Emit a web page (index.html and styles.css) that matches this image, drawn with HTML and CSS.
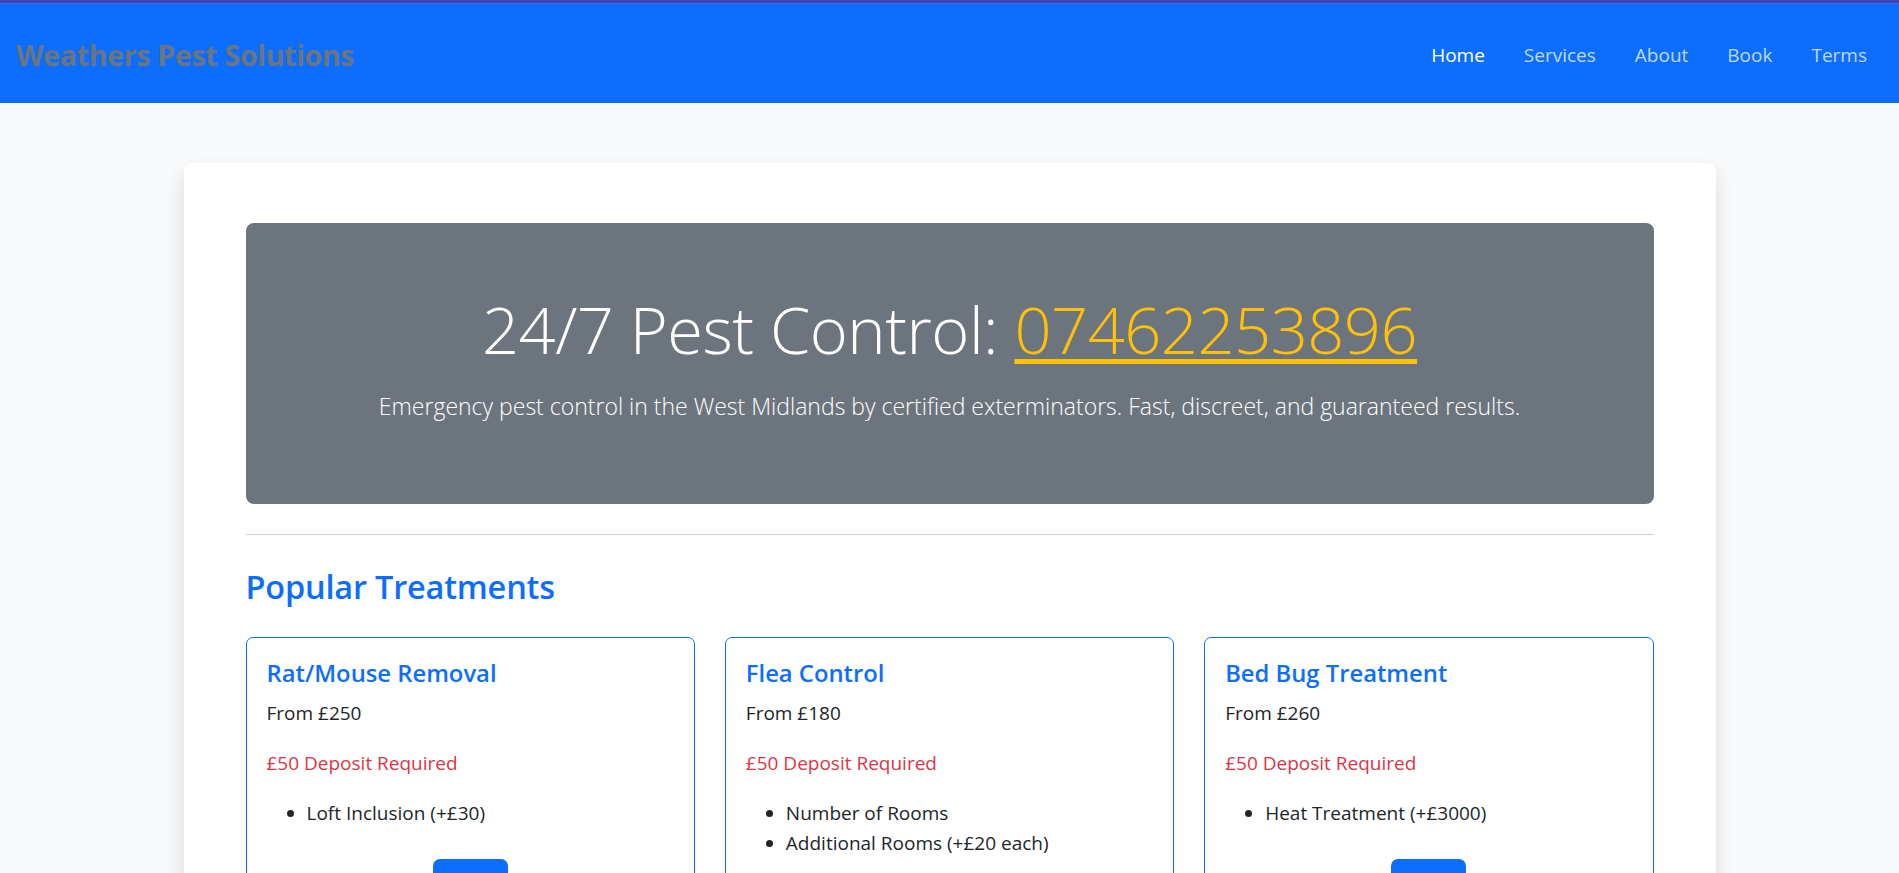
FILE: index.html
```html
<!DOCTYPE html>
<html lang="en">
<head>
<meta charset="utf-8">
<title>Weathers Pest Solutions</title>
<link rel="stylesheet" href="styles.css">
</head>
<body>
<div class="topbar"></div>
<nav class="navbar">
  <a class="brand" href="#">Weathers Pest Solutions</a>
  <ul class="nav">
    <li><a class="nav-link active" href="#">Home</a></li>
    <li><a class="nav-link" href="#">Services</a></li>
    <li><a class="nav-link" href="#">About</a></li>
    <li><a class="nav-link" href="#">Book</a></li>
    <li><a class="nav-link" href="#">Terms</a></li>
  </ul>
</nav>
<main class="page">
  <section class="panel">
    <div class="hero">
      <h1 class="hero-title">24/7 Pest Control: <a class="phone" href="#">07462253896</a></h1>
      <p class="lead">Emergency pest control in the West Midlands by certified exterminators. Fast, discreet, and guaranteed results.</p>
    </div>
    <hr class="divider">
    <h2 class="section-title">Popular Treatments</h2>
    <div class="cards">
      <div class="card">
        <h5 class="card-title">Rat/Mouse Removal</h5>
        <p class="price">From £250</p>
        <p class="deposit">£50 Deposit Required</p>
        <ul class="extras">
          <li>Loft Inclusion (+£30)</li>
        </ul>
        <div class="actions"><a class="btn" href="#">Book</a></div>
      </div>
      <div class="card">
        <h5 class="card-title">Flea Control</h5>
        <p class="price">From £180</p>
        <p class="deposit">£50 Deposit Required</p>
        <ul class="extras">
          <li>Number of Rooms</li>
          <li>Additional Rooms (+£20 each)</li>
        </ul>
        <div class="actions"><a class="btn" href="#">Book</a></div>
      </div>
      <div class="card">
        <h5 class="card-title">Bed Bug Treatment</h5>
        <p class="price">From £260</p>
        <p class="deposit">£50 Deposit Required</p>
        <ul class="extras">
          <li>Heat Treatment (+£3000)</li>
        </ul>
        <div class="actions"><a class="btn" href="#">Book</a></div>
      </div>
    </div>
  </section>
</main>
</body>
</html>
```
FILE: styles.css
```css
html, body {
  margin: 0;
  padding: 0;
}
html {
  overflow: hidden;
}
body {
  font-family: "Open Sans", "Noto Sans", sans-serif;
  color: #212529;
  background: #f8f9fa;
  font-size: 19px;
}
.topbar {
  height: 3px;
  background: #3c45b9;
  border-bottom: 1px solid #3a6ee4;
}
.navbar {
  height: 99px;
  background: #0d6efd;
  display: flex;
  align-items: center;
  justify-content: space-between;
  padding: 0 13px 0 16px;
}
.brand {
  color: #6c757d;
  font-weight: 700;
  font-size: 28.5px;
  text-decoration: none;
  letter-spacing: -0.3px;
  line-height: 36px;
  padding-top: 2px;
}
.nav {
  list-style: none;
  display: flex;
  margin: 0;
  padding: 0;
}
.nav-link {
  display: block;
  padding: 2px 19px 0 20px;
  font-size: 19px;
  color: rgba(255, 255, 255, 0.74);
  text-decoration: none;
  line-height: 30px;
}
.nav-link.active {
  color: #fff;
}
.page {
  padding-top: 60px;
}
.panel {
  width: 1408px;
  margin: 0 auto;
  background: #fff;
  border-radius: 8px;
  box-shadow: 0 10px 20px rgba(0, 0, 0, 0.12);
  padding: 60px 62px;
}
.hero {
  background: #6c757d;
  border-radius: 8px;
  padding: 64px 40px 60px;
  text-align: center;
  color: #fff;
}
.hero-title {
  margin: 0 0 17px;
  font-weight: 300;
  font-size: 65px;
  line-height: 84px;
  letter-spacing: -0.5px;
}
.phone {
  color: #ffc107;
  text-decoration: underline;
  text-decoration-thickness: 5px;
  text-underline-offset: 5px;
}
.lead {
  margin: 0 0 19px;
  font-weight: 300;
  font-size: 23px;
  line-height: 37px;
}
.divider {
  margin: 30px 0 0;
  border: 0;
  border-top: 1px solid #cfd1d3;
}
.section-title {
  margin: 28px 0 26px;
  font-size: 32.5px;
  line-height: 48px;
  font-weight: 600;
  color: #0d6efd;
  letter-spacing: -0.2px;
}
.cards {
  display: grid;
  grid-template-columns: repeat(3, 1fr);
  gap: 30px;
  align-items: start;
}
.card {
  border: 1px solid #0d6efd;
  border-radius: 7px;
  padding: 20px;
}
.card-title {
  margin: 0 0 10px;
  font-size: 23.8px;
  line-height: 30px;
  font-weight: 600;
  color: #0d6efd;
}
.price, .deposit {
  margin: 0 0 20px;
  line-height: 30px;
}
.deposit {
  color: #dc3545;
}
.extras {
  margin: 0;
  padding-left: 40px;
  line-height: 30px;
}
.actions {
  margin-top: 31px;
  text-align: center;
}
.btn {
  display: inline-block;
  background: #0d6efd;
  color: #fff;
  text-decoration: none;
  padding: 8px 15px;
  line-height: 30px;
  border-radius: 7px;
}
```
